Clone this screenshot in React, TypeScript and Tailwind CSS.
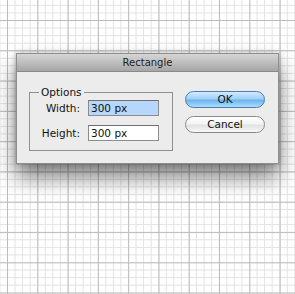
import React from 'react';

const font = { fontFamily: '"DejaVu Sans", "Liberation Sans", sans-serif' };

const Field = ({ value, selected }: { value: string; selected?: boolean }) => (
  <div
    className={`h-[16px] w-[71px] border border-[#8c8c8c] border-t-[#6f6f6f] pl-[2px] text-[10.5px] leading-[14px] text-[#111] ${
      selected ? 'bg-[#b7d6fb]' : 'bg-white'
    }`}
  >
    {value}
  </div>
);

const App = () => {
  return (
    <div
      className="h-screen w-full overflow-hidden bg-white bg-[image:linear-gradient(to_right,#bcbcbc_1px,transparent_1px),linear-gradient(to_bottom,#bcbcbc_1px,transparent_1px),linear-gradient(to_right,#e2e2e2_1px,transparent_1px),linear-gradient(to_bottom,#e2e2e2_1px,transparent_1px)] bg-[size:30.3px_30.3px,30.3px_30.3px,7.575px_7.575px,7.575px_7.575px] bg-[position:7px_20px] pl-[16px] pt-[53px]"
      style={font}
    >
      {/* Dialog */}
      <div className="w-[263px] border border-[#8e8e8e] shadow-[0_13px_20px_rgba(0,0,0,0.5),0_0_6px_rgba(0,0,0,0.2)]">
        <div className="flex h-[18px] items-center justify-center border-b border-[#8a8a8a] bg-gradient-to-b from-[#d6d6d6] to-[#a6a6a6] text-[10px] text-[#1e1e1e]">
          Rectangle
        </div>

        <div className="flex h-[91px] bg-[#ececec] pl-[12px] pt-[14px]">
          <fieldset className="h-[65px] w-[144px] border border-[#909090] text-[10.5px] text-[#111]">
            <legend className="ml-[9px] px-[2px] leading-[12px]">Options</legend>
            <div className="grid grid-cols-[50px_71px] items-center gap-x-[8px] gap-y-[9px] pt-[2px]">
              <span className="text-right leading-[16px]">Width:</span>
              <Field value="300 px" selected />
              <span className="text-right leading-[16px]">Height:</span>
              <Field value="300 px" />
            </div>
          </fieldset>

          <div className="ml-[12px] mt-[5px] flex flex-col gap-[8px]">
            <button className="flex h-[17px] w-[80px] items-center justify-center rounded-full border border-[#4b7bb0] bg-[linear-gradient(to_bottom,#d3ebfd_0%,#9fd1f8_45%,#6fb4ef_55%,#a9def9_100%)] text-[10.5px] leading-none text-[#111]">
              OK
            </button>
            <button className="flex h-[17px] w-[80px] items-center justify-center rounded-full border border-[#8a8a8a] bg-[linear-gradient(to_bottom,#ffffff_0%,#f4f4f4_45%,#e2e2e2_55%,#f7f7f7_100%)] text-[10.5px] leading-none text-[#111]">
              Cancel
            </button>
          </div>
        </div>
      </div>
    </div>
  );
};

export default App;
